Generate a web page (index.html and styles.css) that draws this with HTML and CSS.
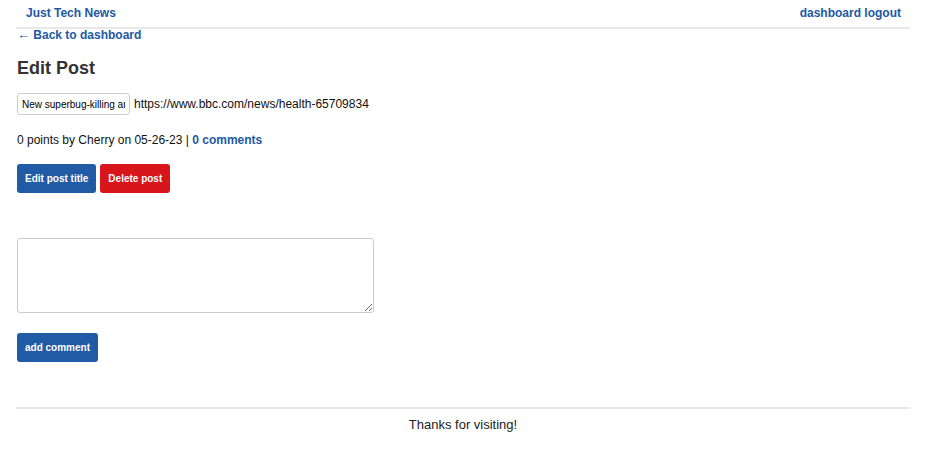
FILE: index.html
```html
<!DOCTYPE html>
<html lang="en">
<head>
<meta charset="utf-8">
<title>Just Tech News</title>
<link rel="stylesheet" href="styles.css">
</head>
<body>
<div class="page">
  <header class="site-header">
    <a class="brand" href="#">Just Tech News</a>
    <nav class="nav"><a href="#">dashboard</a> <a href="#">logout</a></nav>
  </header>
  <main class="main">
    <a class="back" href="#"><span class="arrow">&larr;</span> Back to dashboard</a>
    <h2 class="title">Edit Post</h2>
    <div class="post-row">
      <input class="title-input" type="text" value="New superbug-killing antibiotic discovered using AI">
      <span class="url">https://www.bbc.com/news/health-65709834</span>
    </div>
    <p class="meta">0 points by Cherry on 05-26-23 | <a href="#">0 comments</a></p>
    <div class="actions">
      <button class="btn btn-blue">Edit post title</button>
      <button class="btn btn-red">Delete post</button>
    </div>
    <form class="comment-form">
      <textarea class="comment-box"></textarea>
      <button class="btn btn-blue add" type="button">add comment</button>
    </form>
  </main>
  <footer class="site-footer">Thanks for visiting!</footer>
</div>
</body>
</html>
```
FILE: styles.css
```css
* { box-sizing: border-box; }
body {
  margin: 0;
  font-family: "Liberation Sans", Arial, sans-serif;
  color: #222;
  background: #fff;
}
a { color: #2159a3; text-decoration: none; font-weight: bold; }
.page {
  width: 894px;
  margin-left: 16px;
}
.site-header {
  display: flex;
  justify-content: space-between;
  align-items: center;
  height: 29px;
  padding: 0 9px 2px 10px;
  border-bottom: 2px solid #e8e8e8;
  font-size: 12px;
}
.main { padding: 0 1px; }
.back {
  display: block;
  font-size: 12px;
  line-height: 12px;
}
.arrow { font-size: 13px; }
.title {
  font-size: 18px;
  color: #333;
  margin: 16px 0 14px;
  line-height: 22px;
}
.post-row {
  display: flex;
  align-items: center;
  gap: 4px;
  font-size: 12px;
}
.title-input {
  width: 113px;
  height: 22px;
  font-family: "Liberation Sans", Arial, sans-serif;
  font-size: 10px;
  padding: 0 4px;
  border: 1px solid #ccc;
  border-radius: 3px;
  color: #000;
}
.url { color: #111; }
.meta {
  font-size: 12px;
  margin: 18px 0 17px;
  color: #111;
}
.actions { display: flex; gap: 4px; }
.btn {
  font-family: "Liberation Sans", Arial, sans-serif;
  font-weight: bold;
  font-size: 10px;
  color: #fff;
  border: none;
  border-radius: 3px;
  height: 29px;
  padding: 0 8px;
  cursor: pointer;
}
.btn-blue { background: #215aa5; }
.btn-red { background: #d7151a; }
.comment-form {
  display: flex;
  flex-direction: column;
  align-items: flex-start;
  margin-top: 45px;
}
.comment-box {
  width: 357px;
  height: 75px;
  border: 1px solid #ccc;
  border-radius: 3px;
  resize: vertical;
}
.add { margin-top: 20px; }
.site-footer {
  margin-top: 45px;
  border-top: 2px solid #e8e8e8;
  text-align: center;
  font-size: 13px;
  padding-top: 8px;
  color: #222;
}
```
